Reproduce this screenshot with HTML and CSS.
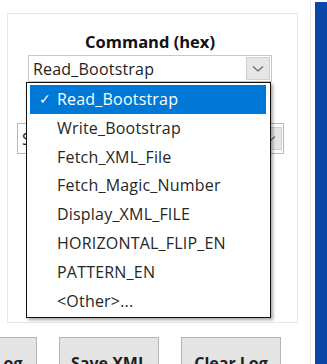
FILE: index.html
```html
<!DOCTYPE html>
<html lang="en">

<head>
  <meta charset="UTF-8">
  <meta name="viewport" content="width=device-width, initial-scale=1.0">
  <title>Command</title>
  <link rel="stylesheet" href="styles.css">
</head>

<body>
  <div class="window">
    <div class="main">
      <div class="panel">
        <div class="field">
          <div class="title">Command (hex)</div>
          <div class="combo">
            <span class="value">Read_Bootstrap</span>
            <span class="arrow">
              <svg width="12" height="8" viewBox="0 0 12 8"><path d="M1 1.5 L6 6 L11 1.5" fill="none" stroke="#6b6b6b" stroke-width="1.3"/></svg>
            </span>
          </div>
          <ul class="list">
            <li class="item active"><span class="check">&#10003;</span>Read_Bootstrap</li>
            <li class="item">Write_Bootstrap</li>
            <li class="item">Fetch_XML_File</li>
            <li class="item">Fetch_Magic_Number</li>
            <li class="item">Display_XML_FILE</li>
            <li class="item">HORIZONTAL_FLIP_EN</li>
            <li class="item">PATTERN_EN</li>
            <li class="item">&lt;Other&gt;...</li>
          </ul>
        </div>
        <div class="combo combo-back">
          <span class="value">Select</span>
          <span class="arrow">
            <svg width="12" height="8" viewBox="0 0 12 8"><path d="M1 1.5 L6 6 L11 1.5" fill="none" stroke="#6b6b6b" stroke-width="1.3"/></svg>
          </span>
        </div>
      </div>
      <div class="buttons">
        <button class="btn">Load Log</button>
        <button class="btn">Save XML</button>
        <button class="btn">Clear Log</button>
      </div>
    </div>
    <div class="sep"></div>
    <div class="side"></div>
  </div>
</body>

</html>
```

FILE: styles.css
```css
* {
  margin: 0;
  padding: 0;
  box-sizing: border-box;
}

body {
  width: 327px;
  height: 364px;
  overflow: hidden;
  background: #fff;
  font-family: "Open Sans", "Noto Sans", sans-serif;
  color: #1e1e1e;
}

.window {
  display: flex;
  height: 364px;
}

.main {
  width: 310px;
  padding: 13px 0 0 7px;
}

.panel {
  width: 291px;
  height: 310px;
  border: 1px solid #e6e6e6;
  padding: 0 0 0 20px;
}

.field {
  position: relative;
  width: 244px;
  padding-top: 16px;
}

.title {
  height: 25px;
  text-align: center;
  font-weight: 700;
  font-size: 16.5px;
  line-height: 24px;
  color: #111;
}

.combo {
  display: flex;
  align-items: center;
  height: 27px;
  border: 1px solid #c8c8c8;
  background: #fff;
  font-size: 16px;
  padding-left: 4px;
}

.combo .value {
  flex: 1;
  letter-spacing: 0.2px;
}

.combo .arrow {
  display: flex;
  align-items: center;
  justify-content: center;
  width: 24px;
  height: 23px;
  margin-right: 1px;
  background: #e6e6e6;
  border: 1px solid #cfcfcf;
}

.combo-back {
  width: 267px;
  height: 31px;
  margin: 41px 0 0 -11px;
  border-color: #b8b8b8;
}

.list {
  position: absolute;
  left: -2px;
  top: 68px;
  width: 245px;
  list-style: none;
  background: #fff;
  border: 1px solid #111;
  padding: 2px 4px 2px 3px;
  box-shadow: 2px 2px 3px rgba(0, 0, 0, 0.35);
  z-index: 2;
}

.item {
  position: relative;
  height: 28.8px;
  line-height: 28.8px;
  padding-left: 27px;
  font-size: 16px;
  letter-spacing: 0.2px;
  color: #262626;
}

.item.active {
  background: #0078d7;
  color: #fff;
}

.check {
  position: absolute;
  left: 9px;
  font-size: 14px;
}

.buttons {
  display: flex;
  gap: 22px;
  margin: 14px 0 0 -70px;
}

.btn {
  width: 100px;
  height: 34px;
  flex: none;
  border: 1px solid #b4b4b4;
  background: #e4e4e4;
  font-family: "Open Sans", "Noto Sans", sans-serif;
  font-weight: 700;
  font-size: 16px;
  color: #1e1e1e;
  padding-top: 14px;
}

.sep {
  width: 1px;
  background: #ececec;
}

.side {
  width: 12px;
  margin: 2px 0 0 4px;
  background: #0a47a8;
}
```
